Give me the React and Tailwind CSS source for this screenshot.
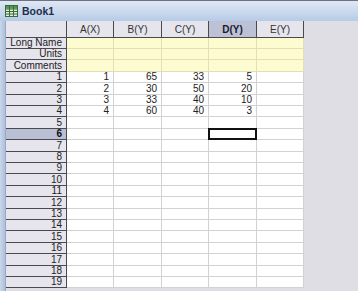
import React from "react";

const cols = [
  { name: "A(X)", w: "w-[47px]" },
  { name: "B(Y)", w: "w-[48px]" },
  { name: "C(Y)", w: "w-[47px]" },
  { name: "D(Y)", w: "w-[48px]", sel: true },
  { name: "E(Y)", w: "w-[47px]" },
];

const data = [
  ["1", "65", "33", "5", ""],
  ["2", "30", "50", "20", ""],
  ["3", "33", "40", "10", ""],
  ["4", "60", "40", "3", ""],
];

const heights = ["h-[11px]", "h-[11px]", "h-[12px]", "h-[11px]", "h-[12px]"];

function BookIcon() {
  return (
    <svg width="13" height="12" viewBox="0 0 13 12" className="shrink-0">
      <rect x="0.5" y="0.5" width="12" height="11" fill="#dff0d8" stroke="#3b6b3b" />
      <rect x="1" y="1" width="11" height="2.5" fill="#4f9a4f" />
      <line x1="4.5" y1="1" x2="4.5" y2="11.5" stroke="#3b6b3b" />
      <line x1="8.5" y1="1" x2="8.5" y2="11.5" stroke="#3b6b3b" />
      <line x1="0.5" y1="4" x2="12.5" y2="4" stroke="#3b6b3b" />
      <line x1="0.5" y1="6.5" x2="12.5" y2="6.5" stroke="#3b6b3b" />
      <line x1="0.5" y1="9" x2="12.5" y2="9" stroke="#3b6b3b" />
    </svg>
  );
}

export default function App() {
  const labelRows = ["Long Name", "Units", "Comments"];
  const rows = [];
  for (let i = 0; i < 22; i++) {
    const h = heights[i % 5];
    if (i < 3) {
      rows.push({ kind: "label", label: labelRows[i], h });
    } else {
      const n = i - 2;
      rows.push({ kind: "data", label: String(n), vals: data[n - 1] || ["", "", "", "", ""], h, sel: n === 6 });
    }
  }

  return (
    <div className="w-[358px] h-[291px] overflow-hidden bg-[#dfdee4] flex flex-col" style={{ fontFamily: '"Liberation Sans", Arial, sans-serif' }}>
      <div className="h-[21px] shrink-0 border-t border-[#6d7380] bg-gradient-to-b from-[#dfe8f5] to-[#b7cbe6] flex items-center gap-[4px] pl-[5px]">
        <BookIcon />
        <span className="text-[10.5px] font-bold text-[#1f2d4a] leading-none">Book1</span>
      </div>
      <div className="flex flex-1 min-h-0">
        <div className="w-[6px] shrink-0 bg-gradient-to-r from-[#c9d8ec] to-[#aebfdb] border-r border-[#9aa9c4]" />
        <div className="flex flex-col shrink-0">
          <div className="flex h-[17px] shrink-0">
            <div className="w-[61px] bg-[#e6e4ec] border-r border-b border-[#4a4a4a]" />
            {cols.map((c) => (
              <div
                key={c.name}
                className={`${c.w} flex items-center justify-center border-r border-b border-[#4a4a4a] text-[10px] ${c.sel ? "bg-[#bcc1d6] font-bold text-[#1a1a2a]" : "bg-[#e6e4ec] text-[#333]"}`}
              >
                {c.name}
              </div>
            ))}
          </div>
          {rows.map((r, i) => (
            <div key={i} className={`flex ${r.h} shrink-0`}>
              <div
                className={`w-[61px] flex items-center justify-end pr-[4px] border-r border-b border-[#4a4a4a] text-[10px] leading-none ${r.sel ? "bg-[#b9bfd5] font-bold text-[#111]" : "bg-[#e6e4ec] text-[#222]"}`}
              >
                {r.label}
              </div>
              {cols.map((c, j) => {
                const isSel = r.sel && j === 3;
                if (r.kind === "label") {
                  return <div key={j} className={`${c.w} bg-[#fdfbd0] border-r border-b border-[#e2dfb8]`} />;
                }
                return (
                  <div
                    key={j}
                    className={`${c.w} relative flex items-center justify-end pr-[4px] bg-white border-r border-b border-[#d2d2d2] text-[10px] leading-none text-[#222]`}
                  >
                    {r.vals[j]}
                    {isSel && (
                      <div className="absolute left-[-1px] top-[-1px] right-[-1px] bottom-[-1px] border-2 border-[#111]" />
                    )}
                  </div>
                );
              })}
            </div>
          ))}
        </div>
        <div className="flex-1 bg-[#dfdee4]" />
      </div>
    </div>
  );
}
